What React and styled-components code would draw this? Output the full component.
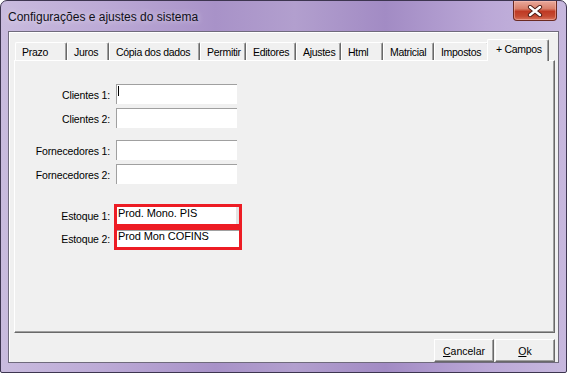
import styled, { createGlobalStyle } from "styled-components";

const GlobalStyle = createGlobalStyle`
  html, body {
    margin: 0;
    padding: 0;
    background: #ffffff;
  }
  * {
    box-sizing: border-box;
  }
`;

const Frame = styled.div`
  width: 567px;
  height: 373px;
  display: flex;
  flex-direction: column;
  padding: 0 7px 9px 7px;
  border: 1px solid #3d3550;
  border-radius: 7px 7px 2px 2px;
  background: linear-gradient(
    90deg,
    #c9bbde 0%,
    #bcaad6 18%,
    #a892c8 38%,
    #b29fce 52%,
    #a28bc4 68%,
    #bba8d7 86%,
    #c7b8de 100%
  );
  font-family: "Liberation Sans", Arial, sans-serif;
`;

const TitleBar = styled.div`
  height: 30px;
  display: flex;
  align-items: flex-start;
`;

const Title = styled.span`
  margin-top: 9px;
  font-size: 12px;
  color: #101018;
  text-shadow: 0 0 6px rgba(255, 255, 255, 0.7);
`;

const CloseButton = styled.div`
  margin-left: auto;
  margin-right: 2px;
  width: 44px;
  height: 20px;
  display: flex;
  align-items: center;
  justify-content: center;
  border: 1px solid #6b2a22;
  border-top: none;
  border-radius: 0 0 4px 4px;
  background: linear-gradient(
    180deg,
    #e9a99c 0%,
    #d9806c 40%,
    #bf3a24 55%,
    #c54a32 80%,
    #d8735c 100%
  );
  box-shadow: inset 0 0 0 1px rgba(255, 200, 190, 0.45);
`;

const Client = styled.div`
  flex: 1;
  display: flex;
  flex-direction: column;
  padding: 7px 3px 0 5px;
  background: #f0f0f0;
  border: 1px solid #6f6a7c;
  box-shadow: inset 1px 1px 0 #ffffff;
`;

const TabStrip = styled.div`
  height: 21px;
  display: flex;
  align-items: flex-end;
  padding-left: 1px;
`;

const Tab = styled.div`
  position: relative;
  width: ${(p) => p.$width}px;
  height: ${(p) => (p.$active ? 22 : 18)}px;
  margin-left: ${(p) => (p.$active ? -2 : 0)}px;
  margin-bottom: ${(p) => (p.$active ? -1 : 0)}px;
  z-index: ${(p) => (p.$active ? 2 : 1)};
  padding: ${(p) => (p.$active ? "3px 0 0 8px" : "3px 0 0 6px")};
  font-size: 10.5px;
  letter-spacing: -0.3px;
  color: #000;
  white-space: nowrap;
  overflow: hidden;
  background: #f0f0f0;
  border-top: 1px solid #ffffff;
  border-left: 1px solid #ffffff;
  border-right: 1px solid #696969;
  border-radius: 2px 2px 0 0;
  box-shadow: inset -1px 0 0 #a0a0a0;
`;

const Panel = styled.div`
  height: 273px;
  padding: 23px 0 0 0;
  background: #f0f0f0;
  border-top: 1px solid #ffffff;
  border-left: 1px solid #ffffff;
  border-right: 1px solid #696969;
  border-bottom: 1px solid #696969;
  box-shadow: inset -1px -1px 0 #a0a0a0;
  display: flex;
  flex-direction: column;
`;

const Group = styled.div`
  display: flex;
  flex-direction: column;
  gap: ${(p) => p.$gap}px;
  margin-top: ${(p) => p.$top}px;
`;

const Row = styled.div`
  display: flex;
  align-items: center;
`;

const Label = styled.span`
  width: 97px;
  padding-right: 2px;
  margin-right: 4px;
  text-align: right;
  font-size: 10.5px;
  letter-spacing: -0.15px;
  color: #000;
  padding-top: ${(p) => (p.$marked ? 0 : 2)}px;
`;

const Field = styled.div`
  width: 121px;
  height: 20px;
  background: #ffffff;
  border-top: 1px solid #a0a0a0;
  border-left: 1px solid #a0a0a0;
  padding: 1px 0 0 1px;
  font-size: 10.5px;
  color: #000;
`;

const MarkedField = styled.div`
  width: 128px;
  height: 23px;
  margin-left: -2px;
  background: #ffffff;
  border: 3px solid #ed1c24;
  padding: 0 0 0 1px;
  font-size: 11px;
  letter-spacing: -0.1px;
  line-height: 13px;
  color: #000;
  box-shadow: ${(p) => (p.$topLine ? "inset 0 1px 0 #a0a0a0" : "inset -3px 0 0 #e4e4e4")};
`;

const Caret = styled.span`
  display: block;
  width: 1px;
  height: 10px;
  background: #000;
`;

const ButtonRow = styled.div`
  margin-top: 6px;
  display: flex;
  justify-content: flex-end;
  gap: 1px;
`;

const Button = styled.div`
  width: 60px;
  height: 23px;
  display: flex;
  align-items: center;
  justify-content: center;
  font-size: 10.5px;
  color: #000;
  background: #f0f0f0;
  border-top: 1px solid #ffffff;
  border-left: 1px solid #ffffff;
  border-right: 1px solid #696969;
  border-bottom: 1px solid #696969;
  box-shadow: inset -1px -1px 0 #a0a0a0;

  u {
    text-decoration: underline;
  }
`;

const tabs = [
  { label: "Prazo", width: 52 },
  { label: "Juros", width: 42 },
  { label: "Cópia dos dados", width: 91 },
  { label: "Permitir", width: 46 },
  { label: "Editores", width: 50 },
  { label: "Ajustes", width: 45 },
  { label: "Html", width: 42 },
  { label: "Matricial", width: 51 },
  { label: "Impostos", width: 55 },
  { label: "+ Campos", width: 62, active: true },
];

const CloseIcon = () => (
  <svg width="16" height="12" viewBox="0 0 16 12">
    <path d="M3 2 L13 10 M13 2 L3 10" stroke="#4a1a14" strokeWidth="4.2" strokeLinecap="round" />
    <path d="M3 2 L13 10 M13 2 L3 10" stroke="#ffffff" strokeWidth="2.4" strokeLinecap="round" />
  </svg>
);

const App = () => {
  return (
    <>
      <GlobalStyle />
      <Frame>
        <TitleBar>
          <Title>Configurações e ajustes do sistema</Title>
          <CloseButton>
            <CloseIcon />
          </CloseButton>
        </TitleBar>
        <Client>
          <TabStrip>
            {tabs.map((t) => (
              <Tab key={t.label} $width={t.width} $active={t.active}>
                {t.label}
              </Tab>
            ))}
          </TabStrip>
          <Panel>
            <Group $gap={4} $top={0}>
              <Row>
                <Label>Clientes 1:</Label>
                <Field>
                  <Caret />
                </Field>
              </Row>
              <Row>
                <Label>Clientes 2:</Label>
                <Field />
              </Row>
            </Group>
            <Group $gap={4} $top={12}>
              <Row>
                <Label>Fornecedores 1:</Label>
                <Field />
              </Row>
              <Row>
                <Label>Fornecedores 2:</Label>
                <Field />
              </Row>
            </Group>
            <Group $gap={0} $top={20}>
              <Row>
                <Label $marked>Estoque 1:</Label>
                <MarkedField>Prod. Mono. PIS</MarkedField>
              </Row>
              <Row>
                <Label $marked>Estoque 2:</Label>
                <MarkedField $topLine>Prod Mon COFINS</MarkedField>
              </Row>
            </Group>
          </Panel>
          <ButtonRow>
            <Button>
              <span>
                <u>C</u>ancelar
              </span>
            </Button>
            <Button>
              <span>
                <u>O</u>k
              </span>
            </Button>
          </ButtonRow>
        </Client>
      </Frame>
    </>
  );
};

export default App;
